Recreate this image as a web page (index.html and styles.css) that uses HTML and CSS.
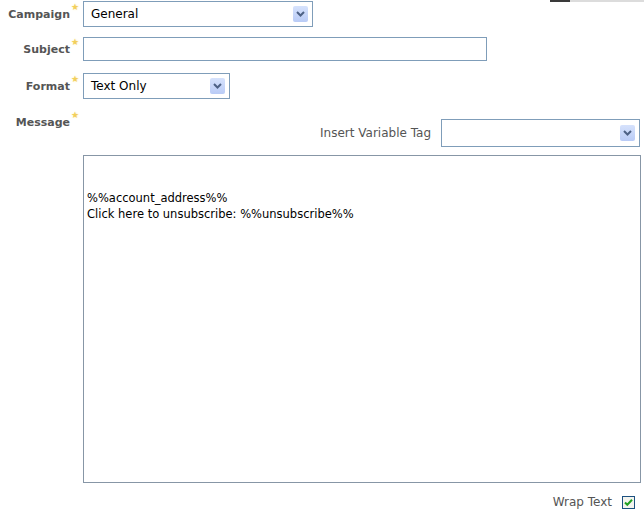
FILE: index.html
```html
<!DOCTYPE html>
<html lang="en">
<head>
  <meta charset="UTF-8" />
  <title>Compose Message</title>
  <link rel="stylesheet" href="styles.css">
</head>
<body>

  <div class="topbar"><span class="topbar-dark"></span><span class="topbar-light"></span></div>

  <div class="form">
    <div class="form-row row-campaign">
      <label>Campaign<span class="req">★</span></label>
      <div class="select select-campaign">
        <span class="select-text">General</span>
        <span class="arrow"><svg width="9" height="6" viewBox="0 0 9 6"><path d="M1 1 L4.5 4.5 L8 1" fill="none" stroke="#4d6185" stroke-width="2"/></svg></span>
      </div>
    </div>

    <div class="form-row row-subject">
      <label>Subject<span class="req">★</span></label>
      <input class="text-input" type="text">
    </div>

    <div class="form-row row-format">
      <label>Format<span class="req">★</span></label>
      <div class="select select-format">
        <span class="select-text">Text Only</span>
        <span class="arrow"><svg width="9" height="6" viewBox="0 0 9 6"><path d="M1 1 L4.5 4.5 L8 1" fill="none" stroke="#4d6185" stroke-width="2"/></svg></span>
      </div>
    </div>

    <div class="form-row row-message">
      <label>Message<span class="req">★</span></label>
      <div class="message-box">
        <div class="tag-row">
          <span class="tag-label">Insert Variable Tag</span>
          <div class="select select-tag">
            <span class="select-text"></span>
            <span class="arrow"><svg width="9" height="6" viewBox="0 0 9 6"><path d="M1 1 L4.5 4.5 L8 1" fill="none" stroke="#4d6185" stroke-width="2"/></svg></span>
          </div>
        </div>
        <textarea class="message">


%%account_address%%
Click here to unsubscribe: %%unsubscribe%%</textarea>
        <div class="wrap-row">
          <span>Wrap Text</span>
          <span class="check"><svg width="13" height="13" viewBox="0 0 13 13">
            <rect x="0.5" y="0.5" width="12" height="12" fill="#f4f4ee" stroke="#1c5180"/>
            <path d="M3 6.5 L5.3 8.8 L10 3.8" fill="none" stroke="#21a121" stroke-width="2"/>
          </svg></span>
        </div>
      </div>
    </div>
  </div>

</body>
</html>
```

FILE: styles.css
```css
body {
  margin: 0;
  background-color: #ffffff;
  font-family: "DejaVu Sans", Verdana, sans-serif;
  font-size: 11px;
  color: #000;
}
.topbar {
  position: absolute;
  top: 0;
  right: 0;
  display: flex;
  height: 2px;
}
.topbar-dark {
  width: 20px;
  background: #3a3a3a;
}
.topbar-light {
  width: 74px;
  background: #dcdcdc;
}
.form {
  padding-top: 1px;
}
.form-row {
  display: flex;
  align-items: center;
}
.form-row label {
  width: 70px;
  margin-right: 13px;
  text-align: right;
  font-weight: bold;
  font-size: 11px;
  color: #555;
  position: relative;
}
.req {
  position: absolute;
  right: -9px;
  top: -6px;
  font-size: 9px;
  color: #f2cf5c;
  text-shadow: 0 0 2px #fbeaa8;
  font-weight: normal;
}
.row-subject {
  margin-top: 10px;
}
.row-format {
  margin-top: 12px;
}
.row-message {
  margin-top: 20px;
  align-items: flex-start;
}
.row-message label {
  margin-top: -3px;
}

.select {
  display: flex;
  align-items: center;
  justify-content: space-between;
  box-sizing: border-box;
  height: 26px;
  border: 1px solid #7f9db9;
  background: #fff;
  padding: 0 4px 0 7px;
}
.select-text {
  font-size: 12px;
  font-family: "DejaVu Sans", sans-serif;
}
.select-campaign {
  width: 230px;
}
.select-format {
  width: 147px;
}
.select-tag {
  width: 199px;
  height: 28px;
}
.arrow {
  display: flex;
  align-items: center;
  justify-content: center;
  width: 15px;
  height: 16px;
  background: linear-gradient(#d6e2fc, #b9cbf6);
  border-radius: 2px;
}

.text-input {
  box-sizing: border-box;
  width: 404px;
  height: 24px;
  border: 1px solid #7f9db9;
  margin: 0;
  padding: 2px 4px;
}

.message-box {
  display: flex;
  flex-direction: column;
  width: 558px;
}
.tag-row {
  display: flex;
  justify-content: flex-end;
  align-items: center;
  margin-right: 1px;
}
.tag-label {
  color: #555;
  font-size: 12px;
  margin-right: 10px;
}
.message {
  display: block;
  box-sizing: border-box;
  width: 558px;
  height: 328px;
  margin: 8px 0 0 0;
  border: 1px solid #8796a6;
  padding: 2px 3px;
  font-family: "DejaVu Sans", sans-serif;
  font-size: 11.5px;
  line-height: 16px;
  color: #000;
  resize: none;
}
.wrap-row {
  display: flex;
  justify-content: flex-end;
  align-items: center;
  margin-top: 11px;
  margin-right: 6px;
  color: #555;
  font-size: 12px;
}
.check {
  display: flex;
  margin-left: 10px;
  margin-top: 2px;
}
```
